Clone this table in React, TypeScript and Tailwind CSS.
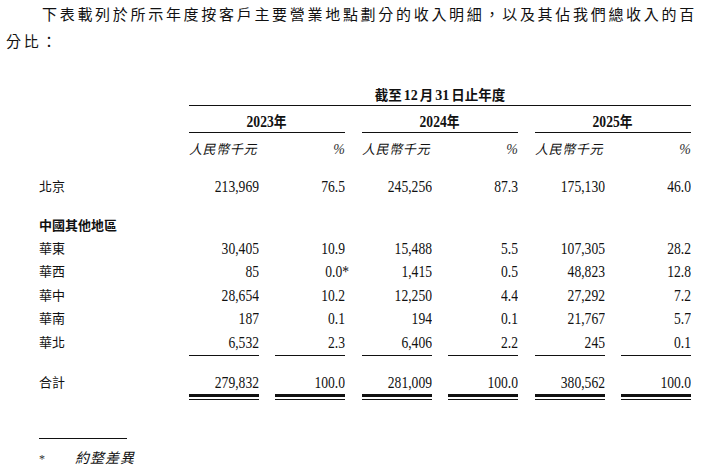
const font = "font-['Liberation_Serif','Noto_Sans_CJK_TC',serif]";

type Row = { label: string; values: string[] };

const regions: Row[] = [
  { label: "華東", values: ["30,405", "10.9", "15,488", "5.5", "107,305", "28.2"] },
  { label: "華西", values: ["85", "0.0*", "1,415", "0.5", "48,823", "12.8"] },
  { label: "華中", values: ["28,654", "10.2", "12,250", "4.4", "27,292", "7.2"] },
  { label: "華南", values: ["187", "0.1", "194", "0.1", "21,767", "5.7"] },
  { label: "華北", values: ["6,532", "2.3", "6,406", "2.2", "245", "0.1"] },
];

const beijing: Row = { label: "北京", values: ["213,969", "76.5", "245,256", "87.3", "175,130", "46.0"] };
const total: Row = { label: "合計", values: ["279,832", "100.0", "281,009", "100.0", "380,562", "100.0"] };

function Num({ value }: { value: string }) {
  const star = value.endsWith("*");
  return (
    <span className={`inline-block origin-right scale-x-[0.85] text-[16px] ${star ? "-mr-[4px]" : ""}`}>
      {value}
    </span>
  );
}

// six value cells: two per year, years separated a little wider
function Cells({ render }: { render: (i: number) => React.ReactNode }) {
  return (
    <div className="flex gap-[17px]">
      {[0, 1, 2].map((g) => (
        <div key={g} className="flex gap-4">
          <div className="w-[70px]">{render(g * 2)}</div>
          <div className="w-[70px]">{render(g * 2 + 1)}</div>
        </div>
      ))}
    </div>
  );
}

function DataRow({ row, className = "", bold = false }: { row: Row; className?: string; bold?: boolean }) {
  return (
    <div className={`flex items-center leading-[20px] ${className}`}>
      <div className={`w-[150px] text-[13px] ${bold ? "font-bold" : ""}`}>{row.label}</div>
      <Cells render={(i) => <div className="text-right"><Num value={row.values[i]} /></div>} />
    </div>
  );
}

export default function App() {
  const years = ["2023", "2024", "2025"];
  return (
    <div className={`w-[709px] h-[475px] bg-white text-[#111] ${font}`}>
      <p className="w-[700px] pl-[6px] pt-[2px] text-[15px] leading-[27px] tracking-[2.7px] indent-[36px]">
        下表載列於所示年度按客戶主要營業地點劃分的收入明細，以及其佔我們總收入的百分比：
      </p>

      <div className="pl-[39px]">
        {/* period header */}
        <div className="mt-[30px] flex">
          <div className="w-[150px]" />
          <div className="w-[502px] h-[20px] border-b border-[#111] text-center text-[13.5px] font-bold leading-[19px]">
            截至<span className="text-[14px] mx-[2px]">12</span>月<span className="text-[14px] mx-[2px]">31</span>日止年度
          </div>
        </div>

        {/* years */}
        <div className="flex">
          <div className="w-[150px]" />
          <div className="flex gap-[17px]">
            {years.map((y) => (
              <div key={y} className="w-[156px] h-[27px] border-b border-[#111] pt-[6px] leading-[20px] text-center font-bold">
                <span className="inline-block scale-x-[0.85] text-[16px]">
                  {y}<span className="text-[15px]">年</span>
                </span>
              </div>
            ))}
          </div>
        </div>

        {/* units */}
        <div className="flex h-[42px] pt-[7px] leading-[20px]">
          <div className="w-[150px]" />
          <Cells
            render={(i) =>
              i % 2 === 0 ? (
                <div className="italic text-[13px] tracking-[0.6px]">人民幣千元</div>
              ) : (
                <div className="text-right italic text-[14px] text-[#333]">%</div>
              )
            }
          />
        </div>

        <DataRow row={beijing} className="h-[23.5px] mb-[15px]" />
        <div className="flex h-[23.5px] items-center text-[13px] font-bold">中國其他地區</div>
        {regions.map((r) => (
          <DataRow key={r.label} row={r} className="h-[23.5px]" />
        ))}

        {/* subtotal rule */}
        <div className="flex">
          <div className="w-[150px]" />
          <Cells render={() => <div className="h-px bg-[#111]" />} />
        </div>

        <DataRow row={total} className="h-[38.5px] items-start pt-[17.5px]" />

        {/* double rule */}
        <div className="flex">
          <div className="w-[150px]" />
          <Cells render={() => <div className="h-[6px] border-t-[3px] border-b border-[#111]" />} />
        </div>

        {/* footnote */}
        <div className="mt-[38px] w-[88px] h-px bg-[#111]" />
        <div className="mt-[10px] flex leading-[20px]">
          <span className="w-[36px] text-[12px] text-[#333]">*</span>
          <span className="italic text-[14px] tracking-[1px]">約整差異</span>
        </div>
      </div>
    </div>
  );
}
